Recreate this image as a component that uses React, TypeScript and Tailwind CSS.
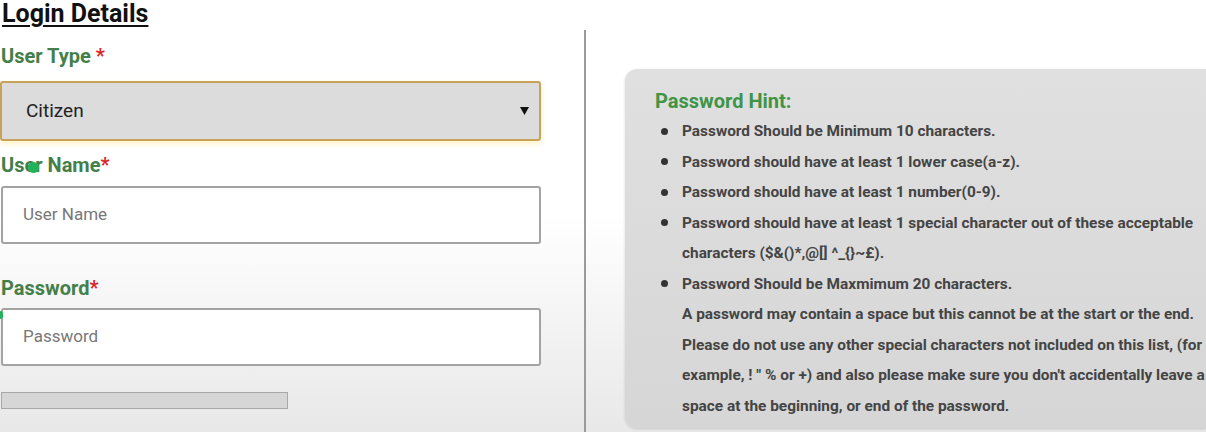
import React from 'react';

const hintLines: { bullet: boolean; text: string }[] = [
  { bullet: true, text: 'Password Should be Minimum 10 characters.' },
  { bullet: true, text: 'Password should have at least 1 lower case(a-z).' },
  { bullet: true, text: 'Password should have at least 1 number(0-9).' },
  { bullet: true, text: 'Password should have at least 1 special character out of these acceptable' },
  { bullet: false, text: 'characters ($&()*,@[] ^_{}~£).' },
  { bullet: true, text: 'Password Should be Maxmimum 20 characters.' },
  { bullet: false, text: 'A password may contain a space but this cannot be at the start or the end.' },
  { bullet: false, text: 'Please do not use any other special characters not included on this list, (for' },
  { bullet: false, text: 'example, ! " % or +) and also please make sure you don\'t accidentally leave a' },
  { bullet: false, text: 'space at the beginning, or end of the password.' },
];

const Label: React.FC<{ text: string; spaced?: boolean; className?: string }> = ({ text, spaced, className }) => (
  <div className={`text-[20px] leading-[28px] font-bold text-[#447f49] ${className ?? ''}`}>
    {text}
    {spaced ? ' ' : ''}
    <span className="text-[#d9262b]">*</span>
  </div>
);

export default function App() {
  return (
    <div
      className="relative w-[1206px] h-[432px] overflow-hidden bg-gradient-to-b from-white via-white to-[#e8e8e8] flex"
      style={{ fontFamily: 'Roboto, "Liberation Sans", sans-serif' }}
    >
      {/* left column */}
      <div className="w-[543px] shrink-0 flex flex-col">
        <h2 className="text-[25px] leading-[28px] font-bold text-[#111] underline underline-offset-[3px] decoration-2 pl-[2px]">
          Login Details
        </h2>
        <Label text="User Type" spaced className="mt-[14px] pl-[1px]" />
        <div className="mt-[11px] h-[60px] w-[541px] rounded-[3px] border-2 border-[#c9a25a] bg-[#dcdcdc] shadow-[0_3px_6px_rgba(255,220,90,0.35)] flex items-center justify-between pl-[24px] pr-[10px]">
          <span className="text-[19px] text-[#222]">Citizen</span>
          <svg width="9" height="8" viewBox="0 0 9 8">
            <path d="M0 0 H9 L4.5 8 Z" fill="#111" />
          </svg>
        </div>
        <Label text="User Name" className="mt-[10px] pl-[1px]" />
        <div className="mt-[7px] h-[58px] w-[540px] ml-[1px] rounded-[3px] border-2 border-[#a3a3a3] bg-white flex items-center pl-[20px]">
          <span className="text-[17px] text-[#777]">User Name</span>
        </div>
        <Label text="Password" className="mt-[30px] pl-[1px]" />
        <div className="mt-[6px] h-[58px] w-[540px] ml-[1px] rounded-[3px] border-2 border-[#a3a3a3] bg-white flex items-center pl-[20px]">
          <span className="text-[17px] text-[#777]">Password</span>
        </div>
        <div className="mt-[26px] h-[17px] w-[287px] ml-[1px] border border-[#a8a8a8] bg-[#d6d6d6]" />
      </div>

      {/* divider */}
      <div className="ml-[41px] mt-[30px] w-[2px] self-stretch bg-[#9b9b9b]" />

      {/* hint */}
      <div className="ml-[39px] mt-[69px] mb-[4px] flex-1 rounded-l-[12px] bg-gradient-to-b from-[#e0e0e0] to-[#d6d6d6] shadow-[0_1px_3px_rgba(0,0,0,0.15)] pl-[30px] pt-[20px]">
        <div className="text-[20px] leading-[24px] font-bold text-[#3f9447]">Password Hint:</div>
        <div className="mt-[3px] text-[15.4px] leading-[30.5px] font-bold text-[#444]">
          {hintLines.map((l, i) => (
            <div key={i} className="flex items-center whitespace-nowrap">
              <span className="w-[27px] shrink-0 pl-[6px]">
                {l.bullet && <span className="block w-[7px] h-[7px] rounded-full bg-[#333]" />}
              </span>
              <span>{l.text}</span>
            </div>
          ))}
        </div>
      </div>

      {/* cursor marks from the recording */}
      <div className="absolute left-[28px] top-[162px] w-[11px] h-[11px] rounded-full bg-[#22b35a]" />
      <div className="absolute left-0 top-[311px] w-[3px] h-[8px] rounded-r bg-[#22b35a]" />
    </div>
  );
}
